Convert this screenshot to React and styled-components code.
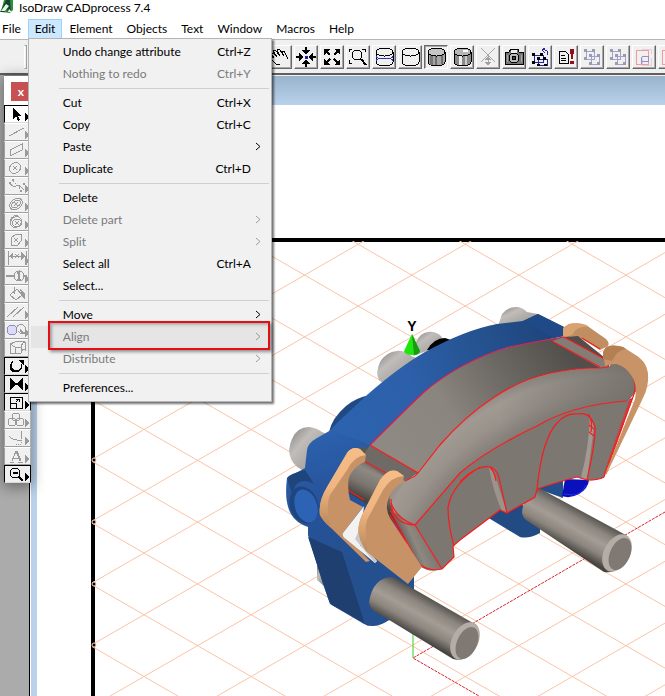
import React from "react";
import styled, { createGlobalStyle, css } from "styled-components";

const GlobalStyle = createGlobalStyle`
  * {
    box-sizing: border-box;
  }
  body {
    margin: 0;
    overflow: hidden;
    background: #ffffff;
    font-family: Lato, "Open Sans", sans-serif;
    font-size: 12px;
    color: #000000;
  }
  button {
    margin: 0;
    padding: 0;
    border: 0;
    background: none;
    font: inherit;
    color: inherit;
  }
  svg {
    display: block;
  }
`;

const Window = styled.div`
  display: flex;
  flex-direction: column;
  height: 100vh;
`;

const TitleBar = styled.header`
  display: flex;
  align-items: center;
  gap: 5px;
  height: 19px;
  padding-bottom: 4px;
`;

const Title = styled.h1`
  margin: 0;
  font-size: 12px;
  font-weight: 400;
  line-height: 15px;
  white-space: nowrap;
`;

const MenuBar = styled.nav`
  display: flex;
  height: 20px;
  margin-left: -5px;
`;

const MenuSlot = styled.div`
  position: relative;
  display: flex;
`;

const MenuTitle = styled.button`
  padding: 0 7px;
  line-height: 18px;
  white-space: nowrap;
  ${props =>
    props.$open &&
    css`
      padding: 0 6px;
      border: 1px solid #99d1ff;
      background: #cce8ff;
    `}
`;

const Dropdown = styled.div`
  position: absolute;
  z-index: 10;
  top: 19px;
  left: 0;
  width: 244px;
  padding: 2px;
  border: 1px solid #b4b4b4;
  background: #f1f1f1;
  box-shadow: 2px 2px 2px rgba(0, 0, 0, 0.55);
`;

const Item = styled.button`
  position: relative;
  display: grid;
  grid-template-columns: 1fr auto 18px;
  align-items: center;
  width: 100%;
  height: 22px;
  padding: 0 0 2px 32px;
  text-align: left;
  white-space: nowrap;
  color: ${props => (props.disabled ? "#7a7a7a" : "#000000")};
  background: ${props => (props.$hover ? "#e5e5e5" : "transparent")};
`;

const Chevron = styled.svg`
  grid-column: 3;
  width: 6px;
  height: 9px;
  margin-left: 4px;
  fill: none;
  stroke: currentColor;
  opacity: ${props => (props.$dim ? 0.7 : 1)};
`;

const Divider = styled.hr`
  height: 1px;
  margin: 3px 0 3px 28px;
  border: 0;
  background: #d0d0d0;
`;

const Marker = styled.span`
  position: absolute;
  z-index: 1;
  top: -5px;
  right: -1px;
  bottom: -2px;
  left: 17px;
  border: 2px solid #e30f13;
  box-shadow: 2px 2px 3px rgba(0, 0, 0, 0.4), inset 2px 2px 3px rgba(0, 0, 0, 0.3);
`;

const ToolBar = styled.div`
  display: flex;
  flex: none;
  gap: 2px;
  height: 36px;
  padding: 5px 0 0 24px;
  overflow: hidden;
  border-top: 1px solid #b5b5b5;
  border-bottom: 2px solid #606060;
  background: #f0f0f0;
`;

const Grip = styled.span`
  flex: none;
  width: 3px;
  height: 24px;
  margin-right: 239px;
  border: 1px solid #a0a0a0;
  border-left-color: #ffffff;
`;

const ToolButton = styled.button`
  flex: none;
  width: 24px;
  height: 24px;
  border: 1px solid;
  border-color: #ffffff #696969 #696969 #ffffff;
  background: #f0f0f0;
  box-shadow: inset -1px -1px 0 #a8a8a8;
  ${props =>
    props.$pressed &&
    css`
      border-color: #696969 #ffffff #ffffff #696969;
      box-shadow: inset 1px 1px 0 #a8a8a8;
    `}
`;

const ToolIcon = styled.svg`
  width: 22px;
  height: 22px;
  fill: none;
  stroke: #000000;
  shape-rendering: crispEdges;
`;

const Workspace = styled.main`
  display: flex;
  flex: 1;
  min-height: 0;
`;

const Dock = styled.aside`
  position: relative;
  z-index: 1;
  flex: none;
  width: 31px;
  padding-left: 4px;
  border-right: 1px solid #ffffff;
  background: #ababab;
  box-shadow: inset -1px 0 0 #000000;
`;

const Palette = styled.div`
  display: flex;
  flex-direction: column;
  width: 27px;
  border-top: 1px solid #7a7a7a;
  background: #ffffff;
  box-shadow: 0 3px 14px 1px rgba(0, 0, 0, 0.4);
`;

const PaletteHead = styled.div`
  height: 29px;
  padding: 6px 0 0 7px;
`;

const CloseButton = styled.button`
  width: 20px;
  height: 19px;
  background: #c75050;
  color: #ffffff;
  font-weight: 700;
  font-size: 12px;
  line-height: 16px;
`;

const PaletteButton = styled.button`
  height: 18px;
  border: 1px solid;
  border-color: ${props =>
    props.disabled ? "#ffffff #b0b0b0 #a0a0a0 #a0a0a0" : "#000000"};
  border-bottom-color: ${props => (props.disabled ? "#a0a0a0" : "#d8d8d8")};
  background: ${props => (props.$selected ? "#ffffff" : "#f0f0f0")};
`;

const PaletteIcon = styled.svg`
  width: 25px;
  height: 16px;
  fill: none;
  stroke: ${props => (props.$dim ? "#9a9a9a" : "#000000")};
  color: ${props => (props.$dim ? "#9a9a9a" : "#000000")};
  shape-rendering: crispEdges;
`;

const Document = styled.section`
  display: flex;
  flex: 1;
  flex-direction: column;
  min-width: 0;
  border-left: 6px solid #b9d1ea;
`;

const DocumentTitle = styled.div`
  flex: none;
  height: 30px;
  margin-left: -6px;
  border-top: 1px solid #f0f0f0;
  background: linear-gradient(#9ab4ce, #b9d1ea);
`;

const Drawing = styled.svg`
  flex: 1;
  width: 100%;
  min-height: 0;
`;

const MENUS = ["File", "Edit", "Element", "Objects", "Text", "Window", "Macros", "Help"];

const EDIT_ITEMS = [
  { label: "Undo change attribute", keys: "Ctrl+Z" },
  { label: "Nothing to redo", keys: "Ctrl+Y", disabled: true },
  null,
  { label: "Cut", keys: "Ctrl+X" },
  { label: "Copy", keys: "Ctrl+C" },
  { label: "Paste", sub: true },
  { label: "Duplicate", keys: "Ctrl+D" },
  null,
  { label: "Delete" },
  { label: "Delete part", sub: true, disabled: true },
  { label: "Split", sub: true, disabled: true },
  { label: "Select all", keys: "Ctrl+A" },
  { label: "Select..." },
  null,
  { label: "Move", sub: true },
  { label: "Align", sub: true, disabled: true, marked: true },
  { label: "Distribute", sub: true, disabled: true },
  null,
  { label: "Preferences..." }
];

const can = "M3 6v10c0 5 17 5 17 0V6";
const nodes = "M3 3h3v3H3zM11 3h3v3h-3zM3 11h3v3H3zM8 8h3v3H8zM16 8h3v3h-3zM8 16h3v3H8zM16 16h3v3h-3z";

const TOOLS = [
  {
    name: "Pan",
    icon: (
      <path d="M5 12 2 8q1-2 3 0l3 3-4-6q1-2 3 0l4 5-3-6q2-2 3 0l4 6-2-4q2-2 3 1l3 6M5 12q-3-1-3 1l5 5h4" />
    )
  },
  {
    name: "Center view",
    icon: (
      <>
        <path d="M11 1v7M11 21v-7M1 11h7M21 11h-7" strokeWidth="2" />
        <path
          d="M7 4h8l-4 5zM7 18h8l-4-5zM4 7v8l5-4zM18 7v8l-5-4z"
          fill="#000"
          stroke="none"
        />
        <path d="M10 10h3v3h-3z" fill="#1c1cb0" stroke="none" />
      </>
    )
  },
  {
    name: "Fit window",
    icon: (
      <>
        <path d="m5 5 4 4M17 5l-4 4M5 17l4-4M17 17l-4-4" strokeWidth="2" />
        <path
          d="M3 3h6L3 9zM19 3v6l-6-6zM3 19v-6l6 6zM19 19h-6l6-6z"
          fill="#000"
          stroke="none"
        />
      </>
    )
  },
  {
    name: "Zoom area",
    icon: (
      <>
        <path d="M2 6V3h3M15 3h3v3M2 14v3h3" />
        <circle cx="10" cy="9" r="5" />
        <path d="m14 13 5 6" strokeWidth="2" />
      </>
    )
  },
  {
    name: "Wireframe",
    icon: (
      <>
        <path d={can} />
        <ellipse cx="11.5" cy="6" rx="8.5" ry="4" />
        <path d="M3 10c0 4 17 4 17 0M3 15c0-4 17-4 17 0" stroke="#2a35b0" />
      </>
    )
  },
  {
    name: "Hidden line",
    icon: (
      <>
        <path d={can} />
        <ellipse cx="11.5" cy="6" rx="8.5" ry="4" />
      </>
    )
  },
  {
    name: "Shaded with edges",
    pressed: true,
    icon: (
      <>
        <path d={can} fill="#a6a6a6" />
        <path d="M5 9h3v10H5z" fill="#777" stroke="none" />
        <path d="M11 10v9M17 9v9" stroke="#707070" strokeWidth="2" />
        <ellipse cx="11.5" cy="6" rx="8.5" ry="4" fill="#c6c6c6" />
      </>
    )
  },
  {
    name: "Shaded",
    icon: (
      <>
        <path d={can} fill="#8a8a8a" />
        <path d="M9 10v9" stroke="#ededed" strokeWidth="3" />
        <path d="M15 10v9" stroke="#c9c9c9" strokeWidth="2" />
        <ellipse cx="11.5" cy="6" rx="8.5" ry="4" fill="#b5b5b5" />
        <path d="M12 5h5" stroke="#fff" strokeWidth="2" />
      </>
    )
  },
  {
    name: "Explode",
    icon: (
      <>
        <path d="M4 2l14 14M18 2 4 16M11 9v10" stroke="#a8a8a8" />
        <path d="m8 14 3-4 3 4zM8 16l3 4 3-4z" fill="#a0a0a0" stroke="none" />
      </>
    )
  },
  {
    name: "Snapshot",
    icon: (
      <>
        <path d="M2 6h4l2-3h7l1 3h4v12H2z" fill="#777" />
        <path d="M8 4h6v3H8z" fill="#eee" stroke="none" />
        <circle cx="11" cy="12" r="5" fill="#bbb" />
        <circle cx="11" cy="12" r="2" fill="#444" />
        <path d="M4 9v7M18 9v7" stroke="#aaa" />
      </>
    )
  },
  {
    name: "Transform parts",
    icon: (
      <>
        <path d="M5 9h9v7H5zM9 13h9v6H9z" stroke="#24249b" />
        <path
          d="M3 7h3v3H3zM11 7h3v3h-3zM3 15h3v3H3zM8 11h3v3H8zM14 11h3v3h-3zM8 18h3v2H8zM15 18h3v2h-3z"
          fill="#000"
          stroke="none"
        />
        <path d="M14 4q5-1 5 5M16 2l-3 2 3 3" stroke="#24249b" />
      </>
    )
  },
  {
    name: "Check list",
    icon: (
      <>
        <path d="M4 5h6l3 3v9H4zM6 9h4M6 12h5M6 14h5" />
        <path d="M15 3h4l-1 10h-2zM15 15h4v3h-4z" fill="#8e0f1b" stroke="none" />
      </>
    )
  },
  {
    name: "Group",
    icon: (
      <>
        <path d="M5 5h8v8H5zM10 10h8v8h-8z" stroke="#a0a0dc" />
        <path d={nodes} fill="#9c9ca4" stroke="none" />
      </>
    )
  },
  {
    name: "Ungroup",
    icon: (
      <>
        <path d="M5 5h8v8H5zM10 10h8v8h-8z" stroke="#a0a0dc" />
        <path d={nodes} fill="#9c9ca4" stroke="none" />
      </>
    )
  },
  {
    name: "Mask",
    icon: (
      <>
        <path d="M9 3h9v5M9 12v7h9v-7" stroke="#dfcfe0" />
        <path d="M3 4h12v14H3z" stroke="#f19a9a" />
        <path d="M8 18v-6l2-2h5v5h-6" stroke="#9b8cc8" />
      </>
    )
  },
  { name: "Unmask", icon: <path d="M3 4h12v14H3z" stroke="#f19a9a" /> }
];

const PALETTE = [
  {
    name: "Select",
    on: true,
    selected: true,
    icon: <path d="M8 2v11l3-3 2 5 2-1-2-4h4z" fill="#000" stroke="none" />
  },
  { name: "Line", icon: <path d="M4 12 19 4" /> },
  { name: "Rectangle", icon: <path d="M5 8v6l12-6V2z" /> },
  {
    name: "Ellipse",
    icon: (
      <>
        <ellipse cx="10" cy="8" rx="6" ry="5" transform="rotate(-35 10 8)" />
        <path d="m8 6 4 4m0-4-4 4" />
      </>
    )
  },
  {
    name: "Spline",
    icon: (
      <>
        <path d="M5 5q3 5 6 3t8 4" />
        <path d="M7 1h2v2H7zM4 4h2v2H4zM18 5h2v2h-2zM15 12h2v2h-2z" fill="currentColor" stroke="none" />
        <path d="m8 3 9 10" strokeDasharray="1 2" />
      </>
    )
  },
  {
    name: "Inner thread",
    icon: (
      <>
        <ellipse cx="11" cy="8" rx="7" ry="5" transform="rotate(-35 11 8)" />
        <ellipse cx="11" cy="8" rx="5" ry="3" transform="rotate(-35 11 8)" />
        <path d="m9 6 4 4m0-4-4 4" />
      </>
    )
  },
  {
    name: "Cylinder",
    icon: (
      <>
        <ellipse cx="11" cy="8" rx="6" ry="5" transform="rotate(-35 11 8)" />
        <ellipse cx="12" cy="9" rx="5" ry="4" />
        <path d="M5 9q0-7 8-8M10 7l4 4m0-4-4 4" />
      </>
    )
  },
  {
    name: "Polygon",
    icon: (
      <>
        <path d="m6 6 5-4 6 1-1 6-4 5-6-1z" />
        <path d="m9 6 4 4m0-4-4 4" />
      </>
    )
  },
  {
    name: "Dimension",
    icon: (
      <>
        <path d="M3 1v14M21 1v14M3 6h18M10 4l4 4m0-4-4 4" />
        <path d="m4 6 4-4v8zM20 6l-4-4v8z" fill="currentColor" stroke="none" />
      </>
    )
  },
  {
    name: "Callout",
    icon: (
      <>
        <path d="M1 8h8M19 8h3" strokeWidth="2" />
        <circle cx="14" cy="8" r="5" />
        <path d="m12 6 2-2v8M12 12h4" strokeWidth="2" />
      </>
    )
  },
  {
    name: "Fill",
    icon: (
      <>
        <path d="m5 9 7-6 5 6-6 5zM9 1v7" />
        <path d="m15 3 5 4v7l-3-4z" fill="currentColor" stroke="none" />
      </>
    ),
    flat: true
  },
  { name: "Parallels", icon: <path d="M2 13 13 3M8 13 19 3" /> },
  {
    name: "Combine",
    icon: (
      <>
        <path d="M11 6q4-6 8-2t0 8q-4 0-6-3" />
        <circle cx="7" cy="8" r="5" fill="#dcdcf8" stroke="#8c8cb4" />
        <path d="m15 6 5 6-3-1-1 3z" fill="currentColor" stroke="none" />
      </>
    )
  },
  {
    name: "Extrude",
    flat: true,
    icon: <path d="M5 4v9h5V7L5 4q8-4 15-2v8q-3-2-4 3h-6M10 7h6v6M16 7q1-4 4-5" />
  },
  {
    name: "Rotate",
    on: true,
    icon: (
      <>
        <path d="M7 4q-5 8 3 10 8-1 7-8" />
        <path d="M8 3q-5 8 3 10 6-1 6-7" />
        <path d="M13 2h6v6z" fill="#000" stroke="none" />
      </>
    )
  },
  {
    name: "Mirror",
    on: true,
    icon: <path d="m5 2 6 5h1l6-5v12l-6-5h-1l-6 5z" fill="#000" stroke="none" />
  },
  {
    name: "Scale",
    on: true,
    icon: (
      <>
        <path d="M5 3h12v11H5zM5 9h6v5" />
        <path d="m11 8 3-3M11 5h3v3" />
      </>
    )
  },
  {
    name: "Blend",
    icon: (
      <>
        <circle cx="11" cy="5" r="4" />
        <circle cx="7" cy="10" r="4" />
        <circle cx="15" cy="10" r="4" />
      </>
    )
  },
  {
    name: "Trim",
    icon: (
      <>
        <path d="M4 6q4 5 12 4M16 1v8" />
        <path d="M16 10v4M11 14h6" strokeDasharray="1 1" />
      </>
    )
  },
  { name: "Text", icon: <path d="M5 14h4M13 14h5M7 13l4-10h1l4 10M15 13 11 3M9 10h6" /> },
  {
    name: "Zoom",
    on: true,
    icon: (
      <>
        <circle cx="10" cy="7" r="5" />
        <path d="M8 7h5M14 11l4 4" strokeWidth="2" />
      </>
    )
  }
];

// Isometric paper grid: both line families cross on the centre point.
const GRID = { x: 144, y: 429.5, step: 61.75, slope: 0.5766 };

const gridPath = () => {
  const lines = [];
  const left = (92 - GRID.x) * GRID.slope;
  const right = (680 - GRID.x) * GRID.slope;
  for (let k = -14; k < 15; k++) {
    const y = GRID.y + k * GRID.step;
    lines.push(`M92 ${y + left}L680 ${y + right}M92 ${y - left}L680 ${y - right}`);
  }
  return lines.join("");
};

const Stops = ({ colors }) =>
  colors.map((color, i) => (
    <stop key={i} offset={i / (colors.length - 1)} stopColor={color} />
  ));

const Caliper = () => (
  <>
    <defs>
      <linearGradient id="blue" x1="330" y1="400" x2="560" y2="320" gradientUnits="userSpaceOnUse">
        <Stops colors={["#2c62ae", "#2d60aa", "#25528f", "#1d4278"]} />
      </linearGradient>
      <linearGradient id="body" x1="320" y1="430" x2="370" y2="560" gradientUnits="userSpaceOnUse">
        <Stops colors={["#2c62ae", "#265299", "#25508f"]} />
      </linearGradient>
      <linearGradient id="top" x1="400" y1="460" x2="570" y2="350" gradientUnits="userSpaceOnUse">
        <Stops colors={["#8f8984", "#8b857f", "#6b6762", "#514e4b"]} />
      </linearGradient>
      <radialGradient id="rim" cx="620" cy="640" r="285" gradientUnits="userSpaceOnUse">
        <stop offset="0.78" stopColor="#7d7772" />
        <stop offset="0.87" stopColor="#99928b" />
        <stop offset="0.93" stopColor="#a19a93" />
        <stop offset="1" stopColor="#807a75" />
      </radialGradient>
      <linearGradient id="rimShade" x1="500" y1="0" x2="640" y2="0" gradientUnits="userSpaceOnUse">
        <stop offset="0" stopColor="#6e6964" stopOpacity="0" />
        <stop offset="1" stopColor="#6e6964" stopOpacity="0.8" />
      </linearGradient>
      <linearGradient id="bolt" x1="0" y1="0" x2="1" y2="1">
        <Stops colors={["#7f7c79", "#c0bdba", "#aaa6a2", "#77736f"]} />
      </linearGradient>
      <linearGradient id="pinA" x1="432" y1="598" x2="412" y2="634" gradientUnits="userSpaceOnUse">
        <Stops colors={["#504d49", "#8b857f", "#a49d95", "#8b857e", "#484541"]} />
      </linearGradient>
      <linearGradient id="pinB" x1="585" y1="511" x2="565" y2="547" gradientUnits="userSpaceOnUse">
        <Stops colors={["#504d49", "#8b857f", "#a49d95", "#8b857e", "#484541"]} />
      </linearGradient>
      <linearGradient id="tube" x1="382" y1="462" x2="364" y2="500" gradientUnits="userSpaceOnUse">
        <Stops colors={["#5a5652", "#8f8983", "#7b756f", "#45423f"]} />
      </linearGradient>
      <linearGradient id="facet" x1="396" y1="545" x2="430" y2="530" gradientUnits="userSpaceOnUse">
        <Stops colors={["#3f3c39", "#8e8881", "#746f69"]} />
      </linearGradient>
      <linearGradient id="sand" x1="0" y1="0" x2="0" y2="1">
        <Stops colors={["#f6bd88", "#f0b580", "#b9875c"]} />
      </linearGradient>
    </defs>

    {/* bolts behind the housing */}
    <g fill="url(#bolt)">
      <path d="M309 427q-12 0-17 12-5 11-1 20 4 9 16 13l22-37-7-3q-5-4-13-5z" />
      <path d="M397 351q-11 1-17 11-5 11-1 18l5 4 33-26q-5-1-7-3-7-5-13-4z" />
      <path d="M428 332q-8 1-12 10l-3 14 33-12-5-8q-6-5-13-4z" />
      <path d="M516 307q-9 0-14 7l-4 12h33l7-12-11-2q-5-5-11-5z" />
      <path d="M317 566v14l7 6-2-19z" />
    </g>
    <path d="M427 350q7-12 18-12l6 2-9 10z" fill="#000" />

    {/* Y axis handle */}
    <path d="M413 574v84" stroke="#2fd41c" />
    <path d="m412 334-8 17q1 4 8 4t8-4z" fill="#1fe510" />
    <path d="m412 334 2 21q5 0 6-4z" fill="#179e10" />
    <text x="412" y="331" textAnchor="middle" fontSize="14" fontWeight="700" fontFamily="Liberation Sans, sans-serif">
      Y
    </text>

    {/* housing */}
    <path d="M329 432q3-14 17-26 9-8 24-11l-8 20z" fill="#214a85" />
    <path
      d="M328 433q3-4 10-11l29-27q32-28 58-43 40-22 72-28l26-3 15-7 26 13v9l-23 5-32 6q-45 13-86 46l-55 54-30 9z"
      fill="url(#blue)"
    />
    <path d="m523 321 15-7 26 13v9l-11 2z" fill="#1f4a87" />
    <path
      d="M307 450q1-7 10-12l14-8 39 15 8 20 36 98v36l-28 23q-12 7-22 2l-34-20-8-23-14-46v-8q-12-4-17-13-7-12-4-36l18-10z"
      fill="url(#body)"
    />
    <path d="m308 537 34 15 21 66q1 8 7 8l-38-21q-3-3-4-7z" fill="#1e3f70" />
    <path d="M363 614q2 10 9 12l18-6-26-12z" fill="#25508f" />
    <path d="M287 478q2-4 18-8l9 14q-12-7-19 2l-3 8z" fill="#1f457d" />
    <ellipse cx="304" cy="505" rx="14" ry="19" transform="rotate(-18 304 505)" fill="#1f457f" />
    <ellipse cx="306" cy="506" rx="11" ry="17" transform="rotate(-18 306 506)" fill="#2d63b4" />

    {/* tube between the retaining clips */}
    <path d="m363 446 47 28-10 52-52-34q-6-26 15-46z" fill="url(#tube)" />
    <path d="m370 445 48 28-12 8-9 3-37-24z" fill="#6f6a65" />

    {/* lower housing and pins */}
    <path d="m487 517 20-19 33 15v20q-11 6-20 4z" fill="#224a83" />
    <path d="m533 489 30-12v21l-25-9z" fill="#234f8c" />
    <path d="m565 479-3 17q8 3 17-2 9-5 10-14z" fill="#0a10bb" />
    <path d="m564 494 9 1q9-1 13-10" fill="none" stroke="#2630e8" />
    <path
      d="M537 487q-14 8-15 26 1 5 4 7l78 52q9 2 19-7 9-9 8-20-2-9-7-11z"
      fill="url(#pinB)"
    />
    <ellipse cx="617" cy="553" rx="13" ry="20" transform="rotate(28 617 553)" fill="#b3ada5" />
    <ellipse cx="620" cy="554" rx="10" ry="17" transform="rotate(24 620 554)" fill="#807973" />
    <path
      d="M393 577q-20 0-24 25 1 9 12 13l72 44q9 3 18-5 9-9 8-22-1-8-6-9z"
      fill="url(#pinA)"
    />
    <ellipse cx="465" cy="641" rx="13" ry="20" transform="rotate(28 465 641)" fill="#b3ada5" />
    <ellipse cx="467" cy="643" rx="10" ry="17" transform="rotate(24 467 643)" fill="#807973" />

    {/* right retaining clip */}
    <path d="m563 328 6-4q9-2 17 1l20 14q4 4 2 7l-8 4-18-11q-8-4-18-1z" fill="#c18e61" />
    <path d="m563 328 6-4q9-2 17 1l3 2q-12-2-17 8l-9 3z" fill="#d9a271" />

    {/* brake pad */}
    <path
      d="M370 445q31-31 53-52 37-32 87-46 22-5 54-10l14-1 32 26-2 5-8 1q-64 1-107 30-28 18-53 47l-22 28z"
      fill="url(#top)"
    />
    <path d="m552 341 12-4 46 25-2 5-8 1z" fill="#837d77" />
    {["url(#rim)", "url(#rimShade)"].map(fill => (
      <path
        key={fill}
        d="m418 473 22-28q25-29 53-47 43-29 107-30l10-2 2-10q12 2 21 9 10 9 5 24l-10 12q-56 4-91 25-49 23-77 47l-45 52q-14-2-22-13-4-8-3-17 4-12 15-15 8-1 13-7z"
        fill={fill}
      />
    ))}
    <path
      d="m415 525 45-52q28-24 77-47 35-21 90-25l6-4-29 80q-4 3-17 3l-10-3q-16 4-40 12l-2 8-28 16-7-3-40 30-7 6 1 11-12 12z"
      fill="#7d7771"
    />
    <path d="m390 510 25 15 27 44q-9 3-15 1-6-2-9-7z" fill="url(#facet)" />
    <path d="m489 467 5 5 13 41-5-2q-9-19-13-44z" fill="#9b948d" />
    <path d="m590 416 4 11-7 53-6-3q8-30 9-61z" fill="#a19a93" />

    <g fill="none" stroke="#fb1a1a" strokeWidth="1.2">
      <path d="M370 445q31-31 53-52 37-32 87-46 22-5 54-10" stroke="#dc1c50" />
      <path d="m370 445 48 28-3 3-10 5M364 461l24 13M348 490l16 10M552 341l48 26M564 337l46 25-2 5-8 1q-64 0-107 30-28 18-53 47l-22 28M582 338l18 11" />
      <path d="m415 525 45-52q28-24 77-47 35-21 90-25" />
      <path d="M391 499q0 25 24 26l27 44M390 510l28 53q10 9 24 6l12-12-1-11 7-6 40-30 7 3 28-16 2-8q24-8 40-12l10 3q13 0 17-3l30-83q3-13-3-21-6-9-14-9" />
      <path d="M480 467q-28 17-32 40 0 18 6 39M460 482q17-18 31-15 6 3 8 11l8 35M490 467q5 6 6 14M537 489q5-50 20-66 9-10 20-9 13-3 18 13 1 12-8 53M588 414q5 6 3 18M589 425l5 4M589 432l5 4M391 503q6 16 24 22M390 515l28 49" />
      <path d="m631 399-26 75" strokeDasharray="1 1" strokeWidth="3" />
    </g>

    <path
      d="m603 352 3-5q7-3 17 0l11 7q12 6 14 19 1 14-5 25l-36 75-2 1 30-75q3-15-4-24-6-9-15-11-7 0-11 2z"
      fill="#c89467"
    />
    <path d="m603 352 3-5q7-3 17 0l3 2q-9 1-14 12l-9-2z" fill="#b47f53" />

    {/* left retaining clips */}
    <path
      d="M320 515q-2-13 7-28l20-34q5-7 13-4l6 6-1 7q-10 3-16 15-2 11 1 23l13 7-20 26 27 28-4 1-36-35q-7-6-10-12z"
      fill="#c69266"
    />
    <path
      d="M320 515q-2-13 7-28l20-34q5-7 13-4l6 6q-12 1-19 15l-17 25q-3 8-2 17l2 15q-7-6-10-12z"
      fill="url(#sand)"
    />
    <path d="m364 506-21 27q-1 4 3 6l29 24 2-2-17-16z" fill="#f2f2f2" />
    <path d="m361 526-6 13 20 24 2-2-17-21z" fill="#c8c8c8" />
    <path
      d="M359 535q-2-8 3-20l18-35q8-12 17-9l7 5-1 6q-11 6-15 18-3 9 2 18l32 49-14 17-41-32q-6-8-8-17z"
      fill="#c69266"
    />
    <path
      d="M359 535q-2-8 3-20l18-35q8-12 17-9l7 5q-12 0-21 14l-16 30q-2 7-1 17l1 15q-6-8-8-17z"
      fill="url(#sand)"
    />
  </>
);

const EditMenu = () => (
  <Dropdown role="menu" aria-label="Edit">
    {EDIT_ITEMS.map((item, i) =>
      item ? (
        <Item key={item.label} role="menuitem" disabled={item.disabled} $hover={item.marked}>
          <span>{item.label}</span>
          <span>{item.keys}</span>
          {item.sub && (
            <Chevron viewBox="0 0 6 9" $dim={item.disabled}>
              <path d="m1 1 4 3.5-4 3.5" />
            </Chevron>
          )}
          {item.marked && <Marker />}
        </Item>
      ) : (
        <Divider key={i} />
      )
    )}
  </Dropdown>
);

const App = () => (
  <Window>
    <GlobalStyle />
    <TitleBar>
      <svg width="14" height="15" viewBox="0 0 14 15">
        <path d="M4 0h9v10l-3 3-9-1z" fill="#2f8f3f" />
        <path d="M0 12 6 0h4l1 12H8L7 9l-3 3z" fill="#14432a" />
        <path d="m1 11 5-7 3 2-4 5zM9 9l3 3H8z" fill="#e9f5e6" />
      </svg>
      <Title>IsoDraw CADprocess 7.4</Title>
    </TitleBar>

    <MenuBar>
      {MENUS.map(name => (
        <MenuSlot key={name}>
          <MenuTitle $open={name === "Edit"}>{name}</MenuTitle>
          {name === "Edit" && <EditMenu />}
        </MenuSlot>
      ))}
    </MenuBar>

    <ToolBar>
      <Grip />
      {TOOLS.map(tool => (
        <ToolButton key={tool.name} aria-label={tool.name} $pressed={tool.pressed}>
          <ToolIcon viewBox="0 0 22 22">{tool.icon}</ToolIcon>
        </ToolButton>
      ))}
    </ToolBar>

    <Workspace>
      <Dock>
        <Palette>
          <PaletteHead>
            <CloseButton aria-label="Close palette">x</CloseButton>
          </PaletteHead>
          {PALETTE.map(tool => (
            <PaletteButton
              key={tool.name}
              aria-label={tool.name}
              disabled={!tool.on}
              $selected={tool.selected}
            >
              <PaletteIcon viewBox="0 0 25 16" $dim={!tool.on}>
                {tool.icon}
                {!tool.flat && <path d="m20 7 4 4-4 4z" fill="currentColor" stroke="none" />}
              </PaletteIcon>
            </PaletteButton>
          ))}
        </Palette>
      </Dock>

      <Document>
        <DocumentTitle />
        <Drawing viewBox="37 105 628 591" preserveAspectRatio="xMinYMin slice">
          <defs>
            <clipPath id="sheet">
              <path d="M92 241h900v900H92z" />
            </clipPath>
          </defs>
          <path d="M1200 240H93v900" fill="none" stroke="#000" strokeWidth="4" />
          <g clipPath="url(#sheet)">
            <path d={gridPath()} fill="none" stroke="#fac3a6" />
          </g>
          <g fill="#000" stroke="#fbd0b8">
            {[460, 522, 584, 645].map(y => (
              <circle key={y} cx="94" cy={y} r="2" />
            ))}
          </g>
          <path d="m665 512-252 146 66 38" fill="none" stroke="#d8232f" strokeDasharray="3 1" />
          <Caliper />
        </Drawing>
      </Document>
    </Workspace>
  </Window>
);

export default App;
